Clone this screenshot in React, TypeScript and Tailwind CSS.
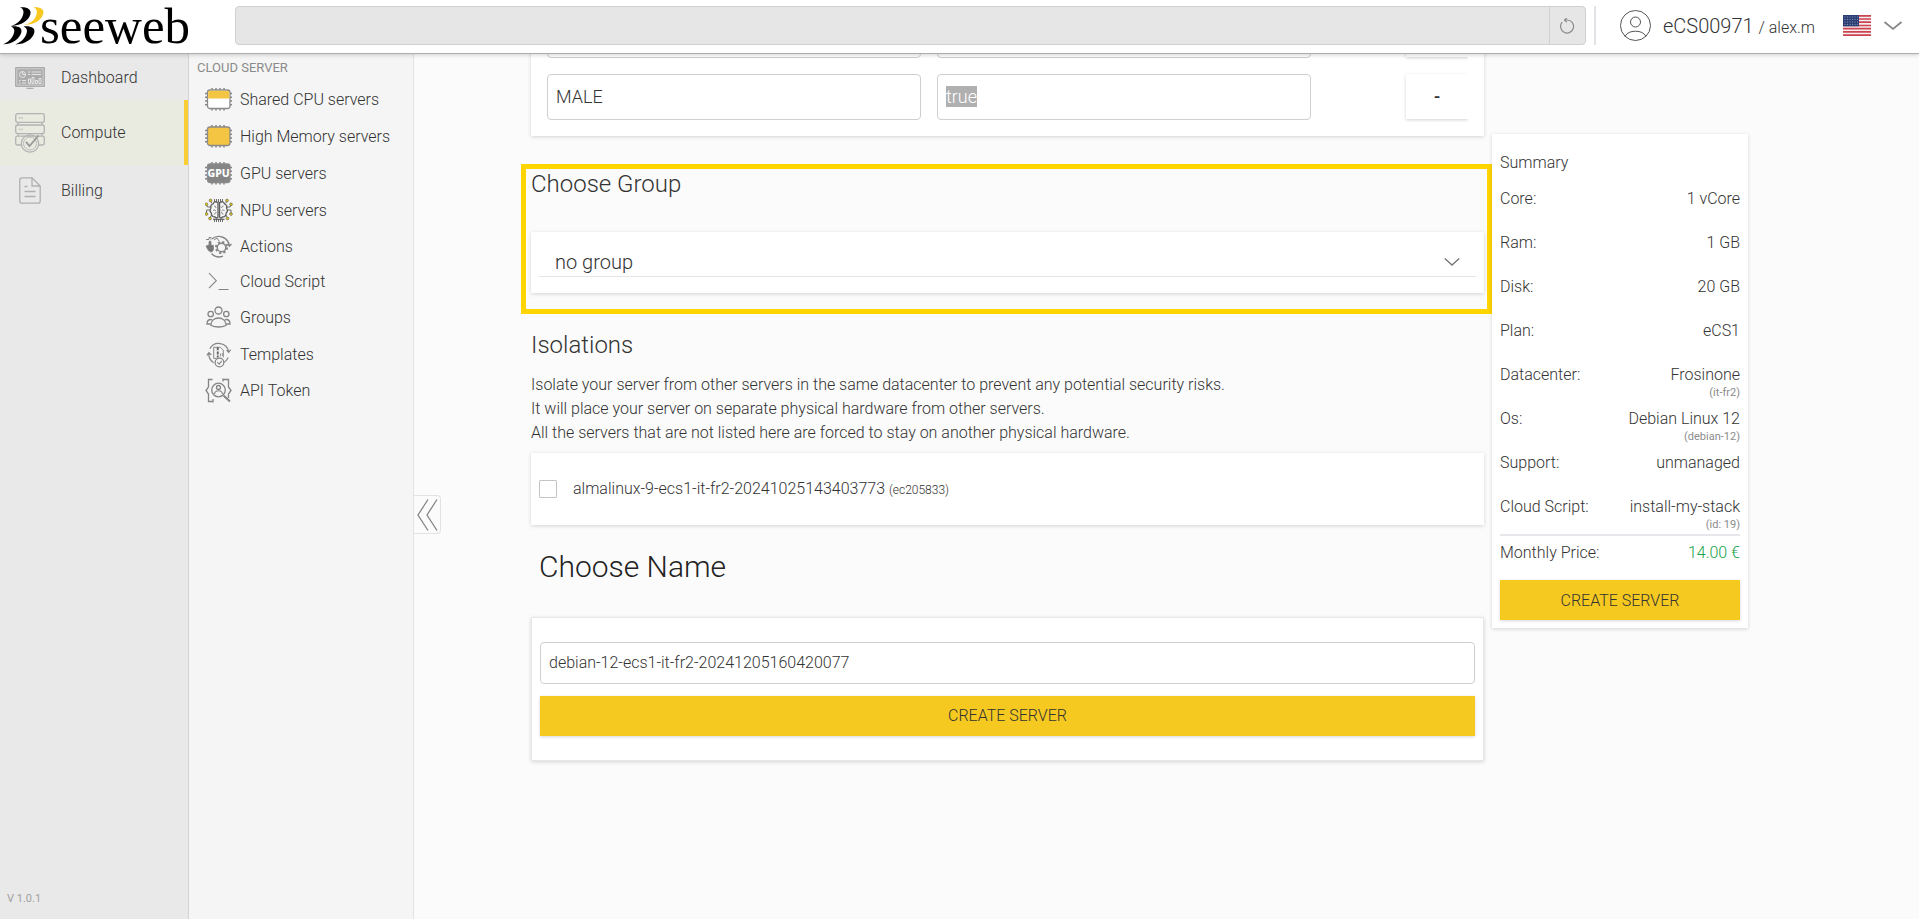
import { useEffect, useRef, type ReactNode } from 'react';

const iconBase = 'h-[27px] w-[28px] shrink-0';

const CHIP_PINS = 'M7 3.500V1M11 3.500V1M15 3.500V1M19 3.500V1M7 21v2.500M11 21v2.500M15 21v2.500M19 21v2.500M2.500 6.500H0M2.500 10.200H0M2.500 14H0M2.500 17.800H0M24.500 6.500H27M24.500 10.200H27M24.500 14H27M24.500 17.800H27';

function ChipIcon({ kind }: { kind: 'shared' | 'memory' | 'gpu' }) {
  const fill = kind === 'shared' ? '#fff' : kind === 'memory' ? '#f4c542' : '#858585';
  return (
    <svg viewBox="0 0 28 25" className={iconBase} fill="none">
      <path d={CHIP_PINS} stroke="#858585" strokeWidth="1.500" />
      <rect x="2.500" y="3" width="22.500" height="18.500" rx="2.500" fill={fill} stroke="#8a8a8a" strokeWidth="1.300" />
      {kind === 'shared' && <path d="M3.200 11.500V5.500Q3.200 3.700 5 3.700H22.500Q24.300 3.700 24.300 5.500V11.500Z" fill="#f4c542" />}
      {kind === 'gpu' && (
        <text x="13.700" y="16.200" textAnchor="middle" fontFamily="'Noto Sans', sans-serif" fontSize="10.500" fontWeight="800" fill="#fff">
          GPU
        </text>
      )}
    </svg>
  );
}

function NpuIcon() {
  return (
    <svg viewBox="0 0 28 25" className={iconBase} fill="none" stroke="#5e5e5e">
      <path d="M9.500 4V1M11.500 4V1M13.500 4V1M15.500 4V1M17.500 4V1M9.500 21v3M11.500 21v3M13.500 21v3M15.500 21v3M17.500 21v3" strokeWidth="0.900" />
      <path d="M8 21.300h11.500" strokeWidth="1.200" />
      <path d="M13 4.500Q9 2.500 8 6Q5 7 6 10Q4 13 6.300 15Q6.500 19 10 19Q12 21 13 19ZM14.600 4.500Q18.500 2.500 19.500 6Q22.500 7 21.500 10Q23.500 13 21.200 15Q21 19 17.500 19Q15.500 21 14.600 19Z" strokeWidth="1.300" />
      <path d="M9 8q2 0 2 2M8 12.500q2-1.500 3 .5M9.500 16.500q0-2 2-2M18.500 8q-2 0-2 2M19.500 12.500q-2-1.500-3 .5M18 16.500q0-2-2-2" strokeWidth="0.700" />
      <path d="M7 5.500L5.500 3M6 9H2.500L1.500 7M5 12H1.500v3M6.500 17L5 20M20.500 5.500L22 3M21.500 9H25l1-2M22.500 12H26v3M21 17l1.500 3" strokeWidth="0.900" />
      <g fill="#dfc414" strokeWidth="0.600">
        <circle cx="5.500" cy="2.500" r="1.400" /><circle cx="1.500" cy="6.300" r="1.400" /><circle cx="1.500" cy="16" r="1.400" /><circle cx="5" cy="20.500" r="1.400" />
        <circle cx="22" cy="2.500" r="1.400" /><circle cx="26" cy="6.300" r="1.400" /><circle cx="26" cy="16" r="1.400" /><circle cx="22.500" cy="20.500" r="1.400" />
      </g>
    </svg>
  );
}

function ActionsIcon() {
  return (
    <svg viewBox="0 0 28 25" className={iconBase} fill="none" stroke="#858585">
      <path d="M7 5A10.500 10.500 0 0 1 24.300 12M22.500 9.800l1.800 2.400 2.200-2.200M6.500 19.500A10.500 10.500 0 0 0 18 22.200" strokeWidth="1.400" />
      <path d="M1 5.500h3V3.500h2v2M9 6l3-2 2 3" strokeWidth="1" />
      <path d="M1 12l3-1V7.500q1.200-1 2 0V11l2.500.5v4Q8 18 5.500 18L3 16Z" fill="#777" strokeWidth="0.800" />
      <circle cx="16.500" cy="13.500" r="4.300" strokeWidth="1.500" />
      <circle cx="16.500" cy="13.500" r="5.600" strokeWidth="1.900" strokeDasharray="2.200 2.200" />
    </svg>
  );
}

function ScriptIcon() {
  return (
    <svg viewBox="0 0 28 25" className={iconBase} fill="none" stroke="#858585" strokeWidth="1.100">
      <path d="M4 4.200l7.300 7.500L4 19.200M13.500 20.500h10" />
    </svg>
  );
}

function GroupsIcon() {
  return (
    <svg viewBox="0 0 28 25" className={iconBase} fill="none" stroke="#858585" strokeWidth="1.300">
      <circle cx="13.500" cy="5.500" r="3.500" />
      <circle cx="5.700" cy="9" r="2.700" />
      <circle cx="21.300" cy="9" r="2.700" />
      <path d="M6 20.500C6 15.500 9.500 13 13.500 13s7.500 2.500 7.500 7.500Q17.500 22 13.500 22T6 20.500Z" />
      <path d="M6 19H2q0-4 3.200-4.500l2.300.7M21 19h4q0-4-3.200-4.500l-2.300.7" />
    </svg>
  );
}

function TemplatesIcon() {
  return (
    <svg viewBox="0 0 28 28" className={iconBase} fill="none" stroke="#858585" strokeWidth="1.300">
      <path d="M4.500 8A10.500 10.500 0 0 1 24 11M21.800 9.500l2.300 2.200 2-2.700M8.500 22.500A10.500 10.500 0 0 1 3.500 12.500M1.500 15l2-2.800 2.500 2M19.500 22A10 10 0 0 0 23.500 17" />
      <path d="M8.500 6.500h7l3 3V17M8.500 6.500V18h3" strokeWidth="1" />
      <path d="M12.700 6.500v3M12.700 11v3M12.700 15v2" stroke="#666" strokeWidth="2" />
      <path d="M15.500 13v3M17.500 12.500v3" strokeWidth="0.900" />
      <circle cx="14.500" cy="22.300" r="4.500" fill="#f5f5f5" />
      <path d="M12.300 22l1.900 2 2.700-3.300" strokeWidth="1.100" />
    </svg>
  );
}

function TokenIcon() {
  return (
    <svg viewBox="0 0 28 25" className={iconBase} fill="none" stroke="#858585" strokeWidth="1.300">
      <path d="M7.500 1.500H3.500V9L1 12.500l2.500 3.500V23.500h4.500M18 1.500h5.500V9l2.500 3.500-2.500 3.500v4M18 .5v3M8 21v3.500" />
      <circle cx="13.500" cy="12" r="6.800" />
      <circle cx="13.500" cy="9.500" r="2" />
      <path d="M9.500 16q.5-3.300 4-3.300t4 3.300" strokeWidth="1.100" />
      <path d="M18.500 17.500l6.500 6" strokeWidth="2" />
    </svg>
  );
}

function DashboardIcon() {
  return (
    <svg viewBox="0 0 30 22" className="h-[22px] w-[30px]" fill="none">
      <rect x="0" y="0" width="30" height="20" rx="1" fill="#acacac" />
      <path d="M1.800 1.800h26.400v16.400H1.800z" stroke="#dcdcdc" strokeWidth="0.700" />
      <path d="M11.500 21.500h7" stroke="#acacac" strokeWidth="1.500" />
      <g stroke="#e6e6e6" strokeWidth="1">
        <circle cx="7.500" cy="7.500" r="3" /><path d="M7.500 4v3.500h3.500M4 13.500h1.500M7 13.500h4M4 16h1.500M7 16h4M13 5h2M16.500 5H26M13 7.500h2M16.500 7.500H26" />
        <path d="M13.500 16.500v-4.500h2v4.500zM17 16.500v-6h2v6zM20.500 16.500v-3h2v3zM24 16.500v-5h2v5z" />
      </g>
    </svg>
  );
}

function ComputeIcon() {
  return (
    <svg viewBox="0 0 30 40" className="h-10 w-[30px]" fill="none" stroke="#b3b3b3" strokeWidth="1.300">
      <rect x="0.700" y="0.700" width="28.600" height="8.600" rx="2" />
      <rect x="0.700" y="12" width="28.600" height="8.600" rx="2" />
      <path d="M6.500 32H2.500q-1.800 0-1.800-1.800V25q0-1.800 1.800-1.800h25q1.800 0 1.800 1.800v5.200q0 1.800-1.800 1.800H24M3 9.700v2M27 9.700v2M3 21v2M27 21v2" />
      <path d="M4 5h1.300M6.500 5h1.300M4 16.300h1.300M6.500 16.300h1.300" />
      <circle cx="15" cy="30.500" r="8.700" />
      <circle cx="15" cy="30.500" r="6.500" strokeWidth="0.900" />
      <path d="M11 28.800l3.500 4.200L23.500 22.500" stroke="#9a9a9a" strokeWidth="1.900" />
    </svg>
  );
}

function BillingIcon() {
  return (
    <svg viewBox="0 0 22 27" className="h-[27px] w-[22px]" fill="none" stroke="#b0b0b0" strokeWidth="1.300">
      <path d="M13 .8H3Q.8.800.8 3v21q0 2.200 2.200 2.200h16q2.200 0 2.200-2.200V9L13 .8V9h8.200M5.500 9.500h3M5.500 14.500h11M5.500 19.500h11" />
    </svg>
  );
}

function Logo() {
  return (
    <a href="#home" aria-label="seeweb" className="flex items-start pl-[3px] text-black">
      <svg viewBox="0 0 37 38" className="mt-[7px] h-[38px] w-[37px] shrink-0 overflow-visible">
        <path d="M17 .3C24 -.4 29 2.300 27.300 7.500C25.500 13.500 19 18.300 8 19C13.500 17.200 17 14.500 19 10.500C21.500 5.500 21 2 17 .3Z" />
        <path d="M30.300 .3C37.500 -.4 42 2.300 40 7.500C38 13.300 32 17.500 21 17.900C27 16.500 30.500 14 32.300 10.500C34.700 5.500 34.500 2 30.300 .3Z" fill="#f9c920" />
        <path d="M8 19.500C15 18.700 19.700 20.700 18.300 25.500C16.500 31.500 10.500 37 0 37.300C5.500 35 8.300 32 10 28.500C12 24.300 12 21.300 8 19.500Z" />
        <path d="M20.500 19.500C27.500 18.700 32.800 20.700 31.200 26C29.300 32 23 37.200 12.300 37.400C18 35.200 21 32 22.700 28.500C24.800 24.300 24.500 21.300 20.500 19.500Z" />
      </svg>
      <span className="pt-[1px] font-[Liberation_Serif,serif] text-[51px] leading-[50px]">seeweb</span>
    </a>
  );
}

function FlagIcon() {
  return (
    <svg viewBox="0 0 28 21" className="h-[21px] w-7">
      <rect width="28" height="21" fill="#f7eeee" />
      <path d="M0 .8h28M0 4h28M0 7.200h28M0 10.500h28M0 13.700h28M0 16.900h28M0 20.200h28" stroke="#cb4450" strokeWidth="1.700" />
      <rect width="16" height="11.300" fill="#2c3f74" />
      <path d="M1.500 2h14M1.500 4.500h14M1.500 7h14M1.500 9.500h14" stroke="#8d99b8" strokeWidth="0.900" strokeDasharray="1 1.500" />
    </svg>
  );
}

const servers: { label: string; icon: ReactNode; tall: boolean }[] = [
  { label: 'Shared CPU servers', icon: <ChipIcon kind="shared" />, tall: true },
  { label: 'High Memory servers', icon: <ChipIcon kind="memory" />, tall: true },
  { label: 'GPU servers', icon: <ChipIcon kind="gpu" />, tall: true },
  { label: 'NPU servers', icon: <NpuIcon />, tall: true },
  { label: 'Actions', icon: <ActionsIcon />, tall: false },
  { label: 'Cloud Script', icon: <ScriptIcon />, tall: false },
  { label: 'Groups', icon: <GroupsIcon />, tall: true },
  { label: 'Templates', icon: <TemplatesIcon />, tall: true },
  { label: 'API Token', icon: <TokenIcon />, tall: false },
];

const summary: { label: string; value: string; note?: string }[] = [
  { label: 'Core:', value: '1 vCore' },
  { label: 'Ram:', value: '1 GB' },
  { label: 'Disk:', value: '20 GB' },
  { label: 'Plan:', value: 'eCS1' },
  { label: 'Datacenter:', value: 'Frosinone', note: '(it-fr2)' },
  { label: 'Os:', value: 'Debian Linux 12', note: '(debian-12)' },
  { label: 'Support:', value: 'unmanaged' },
  { label: 'Cloud Script:', value: 'install-my-stack', note: '(id: 19)' },
];

const card = 'bg-white shadow-[0_1px_4px_rgba(0,0,0,0.16)]';
const field = 'w-full min-w-0 rounded border border-[#cfcfcf] bg-white px-2 pb-0.5 outline-none';
const createButton = 'h-10 w-full bg-[#f6c921] text-base text-[#333] shadow-[0_1px_3px_rgba(0,0,0,0.16)]';

function VariableRow({ name, value, selected }: { name: string; value: string; selected?: boolean }) {
  const valueRef = useRef<HTMLInputElement>(null);
  useEffect(() => {
    if (selected) {
      valueRef.current?.focus({ preventScroll: true });
      valueRef.current?.select();
    }
  }, [selected]);
  return (
    <div className="grid grid-cols-[1fr_1fr_141px] gap-4">
      <input aria-label="Variable name" defaultValue={name} className={`${field} h-[46px] text-lg`} />
      <input
        ref={valueRef}
        aria-label="Variable value"
        defaultValue={value}
        className={`${field} h-[46px] text-lg selection:bg-[#b0b0b0] selection:text-white`}
      />
      <div className="flex justify-end overflow-x-clip">
        <button type="button" aria-label="Remove variable" className="h-[45px] w-[62px] bg-white text-lg font-medium shadow-[0_1px_3px_rgba(0,0,0,0.18)]">
          -
        </button>
      </div>
    </div>
  );
}

export default function App() {
  return (
    <div className="flex h-screen flex-col overflow-hidden bg-[#fbfbfb] font-[Roboto,sans-serif] text-base font-light text-[#333]">
      <header className="relative z-10 flex h-[54px] shrink-0 items-start border-b border-[#aaaeb0] bg-white pr-4 shadow-[0_1px_4px_rgba(0,0,0,0.18)]">
        <div className="w-[235px] shrink-0"><Logo /></div>
        <div className="mt-[6px] flex h-[39px] flex-1 overflow-hidden rounded border border-[#d0d0d0] bg-[#e6e6e6]">
          <input type="search" aria-label="Search" className="min-w-0 flex-1 bg-transparent px-3 outline-none" />
          <button type="button" aria-label="Reload" className="flex w-9 items-center justify-center border-l border-[#d0d0d0]">
            <svg viewBox="0 0 16 16" className="h-4 w-4" fill="none" stroke="#8c8c8c" strokeWidth="1.200">
              <path d="M3.200 4.200A6.500 6.500 0 1 0 8 2H5.500M7.800 0L5.500 2l2.300 2.400" />
            </svg>
          </button>
        </div>
        <div className="mt-[6px] ml-2 h-[39px] w-[2px] shrink-0 bg-[#e2e3e7]" />
        <div className="flex h-[51px] shrink-0 items-center pl-6">
          <svg viewBox="0 0 31 31" className="h-[31px] w-[31px]" fill="none" stroke="#555" strokeWidth="1">
            <circle cx="15.500" cy="15.500" r="15" /><circle cx="15.500" cy="12" r="5" />
            <path d="M5 26.300Q8 21.200 15.500 21.200T26 26.300" />
          </svg>
          <p className="ml-3 text-xl">eCS00971 <span className="text-base">/ alex.m</span></p>
          <button type="button" aria-label="Language and account" className="ml-7 flex items-center gap-3">
            <FlagIcon />
            <svg viewBox="0 0 20 10" className="h-[10px] w-5" fill="none" stroke="#858585" strokeWidth="1.700"><path d="M1.500 1L10 8l8.500-7" /></svg>
          </button>
        </div>
      </header>

      <div className="flex min-h-0 flex-1">
        <aside className="flex w-[189px] shrink-0 flex-col border-r border-[#d2d3d5] bg-[#e9e9e9]">
          <nav aria-label="Main" className="flex flex-col pt-[2px]">
            <a href="#dashboard" className="flex h-11 items-center gap-4 pl-[15px]"><DashboardIcon />Dashboard</a>
            <a href="#compute" aria-current="page" className="flex h-[65px] items-center gap-4 border-r-4 border-[#f9cd33] bg-[#e9eae0] pl-[15px]"><ComputeIcon />Compute</a>
            <a href="#billing" className="flex h-[51px] items-center gap-5 pl-[19px]"><BillingIcon />Billing</a>
          </nav>
          <p className="mt-auto pb-3 pl-[7px] text-[11px] leading-4 font-normal text-[#a0a0a0]">V 1.0.1</p>
        </aside>

        <aside className="w-[225px] shrink-0 border-r border-[#e2e3e5] bg-[#f5f5f5] pt-1">
          <h2 className="mb-[3px] pl-2 text-[13px] leading-5 font-normal text-[#8b8b8b]">CLOUD SERVER</h2>
          <nav aria-label="Cloud server">
            {servers.map((s) => (
              <a key={s.label} href="#servers" className={`flex items-center gap-[7px] pl-4 ${s.tall ? 'h-[37px]' : 'h-[35px]'}`}>
                {s.icon}
                {s.label}
              </a>
            ))}
          </nav>
        </aside>

        <main className="relative flex min-w-0 flex-1 items-start overflow-hidden pr-[171px] pl-[117px]">
          <button type="button" aria-label="Collapse menu" className="absolute top-[441px] left-0 flex h-[39px] w-[27px] items-center justify-center rounded-r border border-l-0 border-[#e2e3e5]">
            <svg viewBox="0 0 22 32" className="h-8 w-[22px]" fill="none" stroke="#858585" strokeWidth="1.300"><path d="M12 .5L2 16l10 15.500M21 .5L11 16l10 15.500" /></svg>
          </button>

          <div className="-mt-[42px] min-w-0 flex-1">
            <section aria-label="Variables" className={`${card} flex flex-col gap-4 px-4 pb-4`}>
              <VariableRow name="" value="" />
              <VariableRow name="MALE" value="true" selected />
            </section>

            <section className="-mr-2 -ml-[10px] mt-7 border-[5px] border-[#ffd500] pr-[3px] pb-4 pl-[5px]">
              <h2 className="text-2xl leading-[30px]">Choose Group</h2>
              <div className={`${card} mt-[33px] px-2 py-4`}>
                <div className="relative">
                  <select aria-label="Group" className="block h-[29px] w-full appearance-none border-b border-[#e5e5e5] bg-transparent px-4 text-xl leading-7 outline-none">
                    <option>no group</option>
                  </select>
                  <svg viewBox="0 0 16 8" className="pointer-events-none absolute top-[10px] right-4 h-2 w-4" fill="none" stroke="#777" strokeWidth="1.400"><path d="M.8.600L8 7l7.200-6.400" /></svg>
                </div>
              </div>
            </section>

            <section className="mt-[15px]">
              <h2 className="text-2xl leading-8">Isolations</h2>
              <p className="mt-3 leading-6">
                Isolate your server from other servers in the same datacenter to prevent any potential security risks.<br />
                It will place your server on separate physical hardware from other servers.<br />
                All the servers that are not listed here are forced to stay on another physical hardware.
              </p>
              <div className={`${card} mt-2 flex h-[72px] items-center px-2`}>
                <input id="isolate" type="checkbox" className="h-[18px] w-[18px] appearance-none rounded-[1px] border border-[#c4c4c4] bg-white checked:bg-[#f6c921]" />
                <label htmlFor="isolate" className="pl-4">
                  almalinux-9-ecs1-it-fr2-20241025143403773 <span className="text-xs">(ec205833)</span>
                </label>
              </div>
            </section>

            <section className="mt-6">
              <h2 className="pl-2 text-3xl leading-9 text-[#222]">Choose Name</h2>
              <form className={`${card} mt-8 flex flex-col gap-3 border border-[#e5e7eb] px-2 py-6`} onSubmit={(e) => e.preventDefault()}>
                <input aria-label="Server name" defaultValue="debian-12-ecs1-it-fr2-20241205160420077" className={`${field} h-[42px] text-base`} />
                <button type="submit" className={createButton}>CREATE SERVER</button>
              </form>
            </section>
          </div>

          <aside className={`${card} mt-20 ml-2 w-64 shrink-0 px-2 pt-[17px] pb-2`}>
            <h2>Summary</h2>
            <dl className="mt-3 -mb-px flex flex-col gap-1">
              {summary.map((row) => (
                <div key={row.label} className="flex h-10 justify-between">
                  <dt>{row.label}</dt>
                  <dd className="text-right">
                    {row.value}
                    {row.note && <small className="block text-[11px] leading-3 font-normal text-[#8b8b8b]">{row.note}</small>}
                  </dd>
                </div>
              ))}
            </dl>
            <p className="flex justify-between border-t-2 border-[#e5e7eb] pt-[5px]">
              <span>Monthly Price:</span>
              <span className="text-[#16a34a]">14.00 €</span>
            </p>
            <button type="button" className={`${createButton} mt-[15px] pt-0.5`}>CREATE SERVER</button>
          </aside>
        </main>
      </div>
    </div>
  );
}
